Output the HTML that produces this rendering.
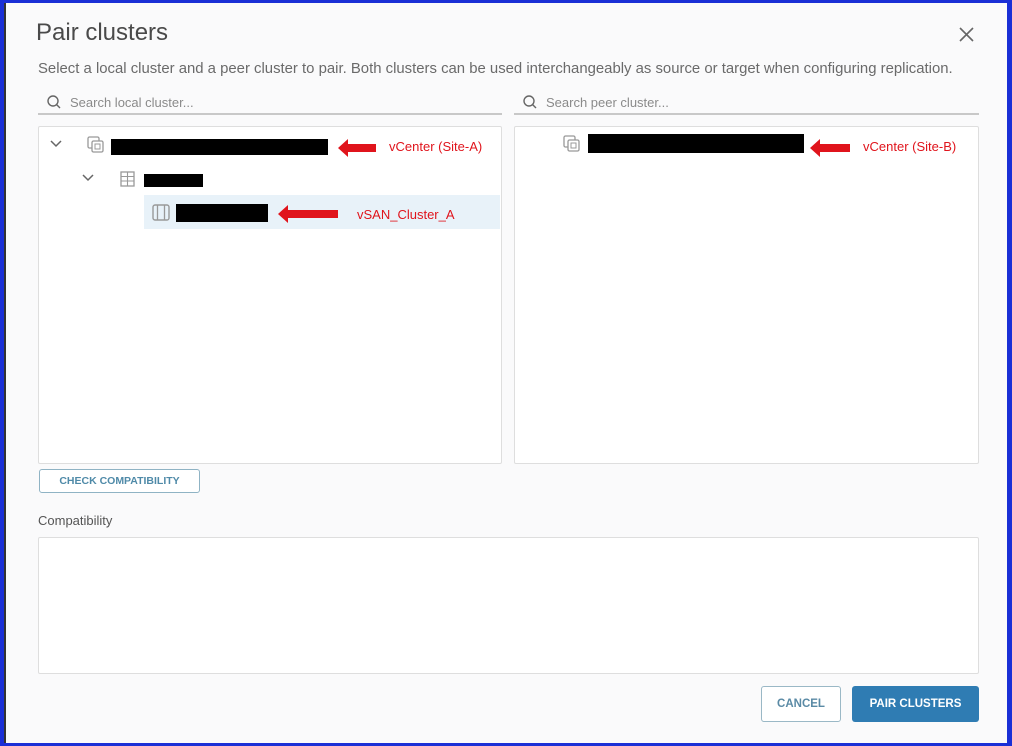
<!DOCTYPE html>
<html><head><style>
*{margin:0;padding:0;box-sizing:border-box}
body{width:1012px;height:746px;overflow:hidden;background:#1a2fd6;font-family:"Liberation Sans",sans-serif;position:relative}
.pg{position:absolute;left:4px;top:3px;width:1003px;height:740px;background:#fafafb;border-left:2px solid #333}
.a{position:absolute}
.box{position:absolute;border:1px solid #dedede;background:#fff;border-radius:2px}
.red{color:#e0141c;font-size:13px}
.blk{position:absolute;background:#000}
.btn{display:flex;align-items:center;justify-content:center;font-weight:bold;border-radius:3px}
</style></head><body>
<div class="pg"></div>
<div class="a" style="left:36px;top:19px;font-size:24px;color:#4a4a4a">Pair clusters</div>
<svg class="a" style="left:959px;top:27px" width="15" height="15"><path d="M1 1L14 14M14 1L1 14" stroke="#666" stroke-width="1.6"/></svg>
<div class="a" style="left:38px;top:61px;font-size:14.9px;color:#6a6a6a;white-space:nowrap">Select a local cluster and a peer cluster to pair. Both clusters can be used interchangeably as source or target when configuring replication.</div>
<svg class="a" style="left:46px;top:94px" width="16" height="16"><circle cx="7" cy="7" r="5" fill="none" stroke="#666" stroke-width="1.4"/><line x1="10.5" y1="10.5" x2="14" y2="14" stroke="#666" stroke-width="1.4"/></svg>
<div class="a" style="left:70px;top:95px;font-size:13px;color:#8a8a8a">Search local cluster...</div>
<div class="a" style="left:38px;top:113px;width:464px;height:2px;background:#c8c8c8"></div>
<svg class="a" style="left:522px;top:94px" width="16" height="16"><circle cx="7" cy="7" r="5" fill="none" stroke="#666" stroke-width="1.4"/><line x1="10.5" y1="10.5" x2="14" y2="14" stroke="#666" stroke-width="1.4"/></svg>
<div class="a" style="left:546px;top:95px;font-size:13px;color:#8a8a8a">Search peer cluster...</div>
<div class="a" style="left:514px;top:113px;width:465px;height:2px;background:#c8c8c8"></div>
<div class="box" style="left:38px;top:126px;width:464px;height:338px"></div>
<div class="box" style="left:514px;top:126px;width:465px;height:338px"></div>
<div class="a" style="left:144px;top:195px;width:356px;height:34px;background:#e8f2f9"></div>
<svg class="a" style="left:50px;top:140px" width="12" height="8"><path d="M1 1L6 6L11 1" fill="none" stroke="#666" stroke-width="1.5"/></svg>
<svg class="a" style="left:82px;top:174px" width="12" height="8"><path d="M1 1L6 6L11 1" fill="none" stroke="#666" stroke-width="1.5"/></svg>
<svg class="a" style="left:87px;top:136px" width="18" height="18"><rect x="1" y="1" width="11" height="11" rx="1.5" fill="none" stroke="#999" stroke-width="1.3"/><rect x="5" y="5" width="11" height="11" rx="1.5" fill="#fff" stroke="#999" stroke-width="1.3"/><rect x="8" y="8" width="5" height="5" fill="none" stroke="#999"/></svg>
<svg class="a" style="left:563px;top:135px" width="18" height="18"><rect x="1" y="1" width="11" height="11" rx="1.5" fill="none" stroke="#999" stroke-width="1.3"/><rect x="5" y="5" width="11" height="11" rx="1.5" fill="#fff" stroke="#999" stroke-width="1.3"/><rect x="8" y="8" width="5" height="5" fill="none" stroke="#999"/></svg>
<svg class="a" style="left:120px;top:171px" width="16" height="16"><rect x="1" y="1" width="13" height="14" fill="none" stroke="#999" stroke-width="1.3"/><path d="M7.5 1V15M1 5.5H14M1 10H14" stroke="#999" stroke-width="1.1"/></svg>
<svg class="a" style="left:152px;top:204px" width="18" height="17"><rect x="1" y="1" width="16" height="15" rx="2" fill="none" stroke="#999" stroke-width="1.4"/><path d="M5.5 1V16M12.5 1V16" stroke="#999" stroke-width="1.3"/></svg>
<div class="blk" style="left:111px;top:139px;width:217px;height:16px"></div>
<div class="blk" style="left:144px;top:174px;width:59px;height:13px"></div>
<div class="blk" style="left:176px;top:204px;width:92px;height:18px"></div>
<div class="blk" style="left:588px;top:134px;width:216px;height:19px"></div>
<svg class="a" style="left:338px;top:138px" width="40" height="20"><polygon points="0,10 10,1 10,6 38,6 38,14 10,14 10,19" fill="#e0141c"/></svg>
<svg class="a" style="left:278px;top:204px" width="62" height="20"><polygon points="0,10 10,1 10,6 60,6 60,14 10,14 10,19" fill="#e0141c"/></svg>
<svg class="a" style="left:810px;top:138px" width="42" height="20"><polygon points="0,10 10,1 10,6 40,6 40,14 10,14 10,19" fill="#e0141c"/></svg>
<div class="a red" style="left:389px;top:139px">vCenter (Site-A)</div>
<div class="a red" style="left:357px;top:207px">vSAN_Cluster_A</div>
<div class="a red" style="left:863px;top:139px">vCenter (Site-B)</div>
<div class="a btn" style="left:39px;top:469px;width:161px;height:24px;border:1.5px solid #8fb3c4;background:#fff;font-size:10.5px;color:#4f8aa8">CHECK COMPATIBILITY</div>
<div class="a" style="left:38px;top:513px;font-size:13px;color:#555">Compatibility</div>
<div class="box" style="left:38px;top:537px;width:941px;height:137px"></div>
<div class="a btn" style="left:761px;top:686px;width:80px;height:36px;border:1.5px solid #9ab8c6;background:#fff;font-size:11.5px;color:#5a8aa5">CANCEL</div>
<div class="a btn" style="left:852px;top:686px;width:127px;height:36px;background:#2f7cb3;font-size:11.5px;color:#fff">PAIR CLUSTERS</div>
</body></html>
